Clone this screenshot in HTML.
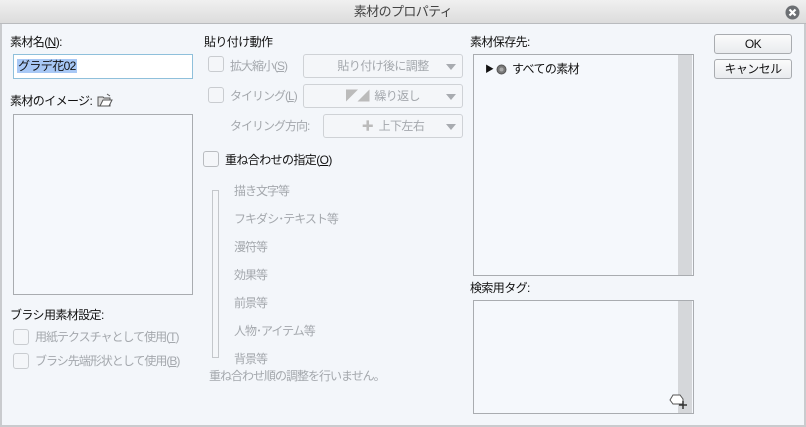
<!DOCTYPE html><html><head><meta charset="utf-8"><style>
*{margin:0;padding:0;box-sizing:border-box}
body{width:806px;height:427px;overflow:hidden;background:#f3f6fa;font-family:"Liberation Sans","Noto Sans CJK JP",sans-serif;font-size:12px;color:#111;position:relative;letter-spacing:-0.6px}
.a{position:absolute;white-space:nowrap;line-height:14px}
.g{color:#a4a8ad;letter-spacing:-1px}
.frame{position:absolute;left:0;top:0;width:806px;height:427px;border:2px solid #c9cbce;border-top:none}
.title{position:absolute;left:0;top:0;width:806px;height:24px;background:linear-gradient(#f0f0f0,#dcdcdc);border-bottom:1px solid #b9bbbe;text-align:center;line-height:24px;color:#444;font-size:13px}
.box{position:absolute;background:#f5f8fc;border:1px solid #a9acb0}
.cb{position:absolute;width:16px;height:16px;border:1px solid #c9ccd0;border-radius:3px;background:#f4f6f9}
.dd{position:absolute;border:1px solid #cfd2d6;border-radius:3px;background:#f4f6f9;color:#a4a8ad;text-align:center;line-height:22px}
.dd:after{content:"";position:absolute;right:6px;top:9px;border:5px solid transparent;border-top:6px solid #a8abb0}
.btn{position:absolute;left:714px;width:78px;height:20px;border:1px solid #a9acb0;border-radius:3px;background:linear-gradient(#fbfbfb,#e9ebee);text-align:center;line-height:18px}
.sb{position:absolute;width:14px;background:#d5d7da}
</style></head><body>
<div class="frame"></div>
<div class="title">素材のプロパティ</div>
<svg style="position:absolute;left:785px;top:5px" width="15" height="15"><circle cx="7.5" cy="7.5" r="7" fill="#6c6f73"/><path d="M4.5 4.5l6 6M10.5 4.5l-6 6" stroke="#fff" stroke-width="2.2"/></svg>

<div class="a" style="left:10px;top:35px">素材名(<u>N</u>):</div>
<div style="position:absolute;left:13px;top:54px;width:180px;height:25px;background:#fff;border:1px solid #8fc0db"></div>
<div class="a" style="left:17px;top:59px;background:#a8c8f5;padding:0 1px">グラデ花02</div>
<div class="a" style="left:10px;top:94px">素材のイメージ:</div>
<svg style="position:absolute;left:97px;top:93px" width="16" height="14"><path d="M1 4h5l1 1h6v8H1z" fill="#ddd" stroke="#555"/><path d="M3 13l3-6h9l-3 6z" fill="#fff" stroke="#555"/><path d="M10 1l3 2" stroke="#555"/></svg>
<div class="box" style="left:13px;top:114px;width:180px;height:181px"></div>
<div class="a" style="left:10px;top:308px">ブラシ用素材設定:</div>
<div class="cb" style="left:13px;top:329px"></div><div class="a g" style="left:35px;top:330px">用紙テクスチャとして使用(<u>T</u>)</div>
<div class="cb" style="left:13px;top:353px"></div><div class="a g" style="left:35px;top:354px">ブラシ先端形状として使用(<u>B</u>)</div>

<div class="a" style="left:204px;top:35px">貼り付け動作</div>
<div class="cb" style="left:208px;top:56px"></div><div class="a g" style="left:230px;top:59px">拡大縮小(<u>S</u>)</div>
<div class="dd" style="left:303px;top:54px;width:160px;height:24px">貼り付け後に調整</div>
<div class="cb" style="left:208px;top:87px"></div><div class="a g" style="left:230px;top:89px">タイリング(<u>L</u>)</div>
<div class="dd" style="left:303px;top:84px;width:160px;height:24px"><span style="color:#bbb">◤◢</span>&nbsp;&nbsp;繰り返し</div>
<div class="a g" style="left:230px;top:119px">タイリング方向:</div>
<div class="dd" style="left:323px;top:114px;width:140px;height:24px"><span style="color:#bbb">✚</span>&nbsp;&nbsp;上下左右</div>
<div class="cb" style="left:203px;top:151px;border-color:#b9bcc0"></div><div class="a" style="left:225px;top:153px">重ね合わせの指定(<u>O</u>)</div>
<div style="position:absolute;left:212px;top:190px;width:7px;height:168px;border:1px solid #c4c7cb;background:#f4f6f9"></div>
<div class="a g" style="left:234px;top:184px">描き文字等</div>
<div class="a g" style="left:234px;top:212px">フキダシ･テキスト等</div>
<div class="a g" style="left:234px;top:240px">漫符等</div>
<div class="a g" style="left:234px;top:268px">効果等</div>
<div class="a g" style="left:234px;top:296px">前景等</div>
<div class="a g" style="left:234px;top:324px">人物･アイテム等</div>
<div class="a g" style="left:234px;top:352px">背景等</div>
<div class="a g" style="left:209px;top:369px">重ね合わせ順の調整を行いません。</div>

<div class="a" style="left:470px;top:35px">素材保存先:</div>
<div class="box" style="left:473px;top:54px;width:221px;height:222px"></div>
<div class="sb" style="left:678px;top:55px;height:220px"></div>
<div class="a" style="left:485px;top:62px;font-size:9px">▶</div>
<svg style="position:absolute;left:496px;top:64px" width="11" height="11"><circle cx="5.5" cy="5.5" r="4.5" fill="#777" stroke="#555"/><circle cx="5.5" cy="5.5" r="2" fill="#aaa"/></svg>
<div class="a" style="left:512px;top:62px">すべての素材</div>
<div class="a" style="left:470px;top:281px">検索用タグ:</div>
<div class="box" style="left:473px;top:300px;width:221px;height:114px"></div>
<div class="sb" style="left:678px;top:301px;height:112px"></div>
<svg style="position:absolute;left:669px;top:393px" width="22" height="18"><path d="M4 2h7l3 4v5H4l-3-4z" fill="#fff" stroke="#555"/><path d="M14 8v8M10 12h8" stroke="#333" stroke-width="1.5"/></svg>

<div class="btn" style="top:34px">OK</div>
<div class="btn" style="top:59px">キャンセル</div>
</body></html>
